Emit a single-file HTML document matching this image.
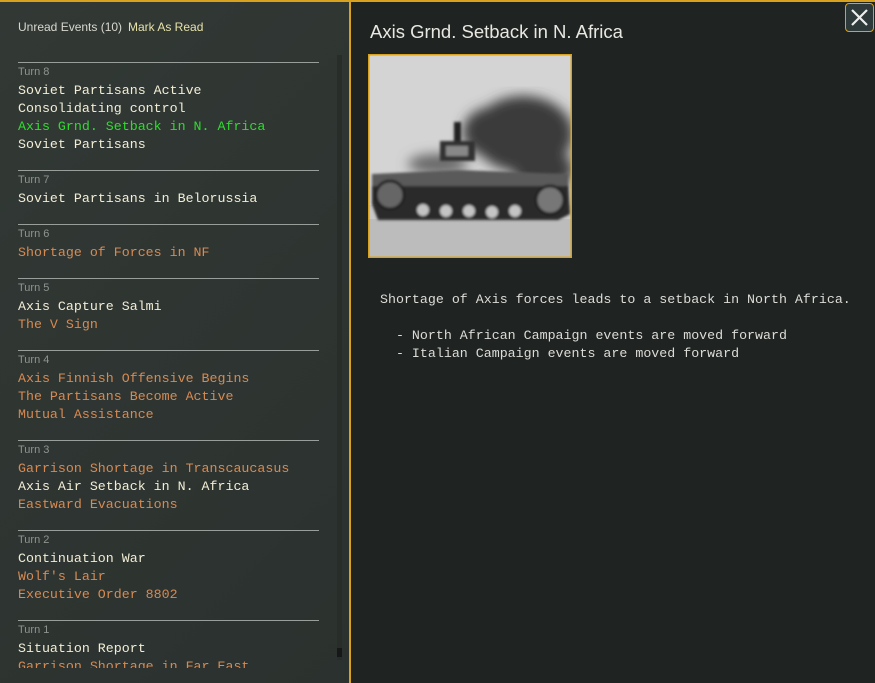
<!DOCTYPE html>
<html><head><style>
*{margin:0;padding:0;box-sizing:border-box}
body{width:875px;height:683px;overflow:hidden;background:#1f2321;position:relative;font-family:"Liberation Sans",sans-serif}
#left{position:absolute;left:0;top:0;width:350px;height:683px;background:linear-gradient(135deg,#323935,#2b312e)}
#top{position:absolute;left:0;top:0;width:875px;height:2px;background:#d9a21e}
#vl{position:absolute;left:349px;top:0;width:2px;height:683px;background:#d9a21e}
.h{position:absolute;top:20px;font-size:12px;color:#d8d8d0}
.sep{position:absolute;left:18px;width:301px;height:1px;background:#9a9e9a}
.t{position:absolute;left:18px;font-size:11px;color:#8f9490}
.e{position:absolute;left:18px;font-family:"Liberation Mono",monospace;font-size:13.3px;line-height:18px;white-space:pre}
.w{color:#f2eed6}.o{color:#d88a52}.g{color:#2fdc2f}
.r{position:absolute;left:380px;font-family:"Liberation Mono",monospace;font-size:13.3px;line-height:18px;color:#dcdcd8;white-space:pre}
</style></head><body>
<div id="left"></div>
<div style="position:absolute;left:337px;top:55px;width:5px;height:605px;background:#282d2a"></div>
<div style="position:absolute;left:337px;top:648px;width:5px;height:9px;background:#151816"></div>
<div id="top"></div><div id="vl"></div>
<div class="h" style="left:18px">Unread Events (10)</div>
<div class="h" style="left:128px;color:#e6e2a8">Mark As Read</div>

<div class="sep" style="top:62px"></div><div class="t" style="top:66px">Turn 8</div>
<div class="e w" style="top:82px">Soviet Partisans Active</div>
<div class="e w" style="top:100px">Consolidating control</div>
<div class="e g" style="top:118px">Axis Grnd. Setback in N. Africa</div>
<div class="e w" style="top:136px">Soviet Partisans</div>

<div class="sep" style="top:170px"></div><div class="t" style="top:174px">Turn 7</div>
<div class="e w" style="top:190px">Soviet Partisans in Belorussia</div>

<div class="sep" style="top:224px"></div><div class="t" style="top:228px">Turn 6</div>
<div class="e o" style="top:244px">Shortage of Forces in NF</div>

<div class="sep" style="top:278px"></div><div class="t" style="top:282px">Turn 5</div>
<div class="e w" style="top:298px">Axis Capture Salmi</div>
<div class="e o" style="top:316px">The V Sign</div>

<div class="sep" style="top:350px"></div><div class="t" style="top:354px">Turn 4</div>
<div class="e o" style="top:370px">Axis Finnish Offensive Begins</div>
<div class="e o" style="top:388px">The Partisans Become Active</div>
<div class="e o" style="top:406px">Mutual Assistance</div>

<div class="sep" style="top:440px"></div><div class="t" style="top:444px">Turn 3</div>
<div class="e o" style="top:460px">Garrison Shortage in Transcaucasus</div>
<div class="e w" style="top:478px">Axis Air Setback in N. Africa</div>
<div class="e o" style="top:496px">Eastward Evacuations</div>

<div class="sep" style="top:530px"></div><div class="t" style="top:534px">Turn 2</div>
<div class="e w" style="top:550px">Continuation War</div>
<div class="e o" style="top:568px">Wolf's Lair</div>
<div class="e o" style="top:586px">Executive Order 8802</div>

<div class="sep" style="top:620px"></div><div class="t" style="top:624px">Turn 1</div>
<div class="e w" style="top:640px">Situation Report</div>
<div style="position:absolute;left:0;top:658px;width:336px;height:10px;overflow:hidden"><div class="e o" style="top:0px">Garrison Shortage in Far East</div></div>

<div style="position:absolute;left:370px;top:21px;font-size:18.5px;color:#e8e8e2">Axis Grnd. Setback in N. Africa</div>
<div style="position:absolute;left:845px;top:3px;width:29px;height:29px;border:1px solid #d9a21e;border-radius:4px;background:#2e3a3a">
<svg width="27" height="27" viewBox="0 0 27 27"><path d="M6 6L21 21M21 6L6 21" stroke="#eee" stroke-width="2.2"/></svg></div>

<svg style="position:absolute;left:368px;top:54px" width="204" height="204" viewBox="0 0 204 204">
<defs><filter id="b"><feGaussianBlur stdDeviation="6"/></filter><filter id="b2"><feGaussianBlur stdDeviation="1.2"/></filter></defs>
<rect x="0" y="0" width="204" height="204" fill="#c9c9c9"/>
<rect x="1" y="1" width="202" height="150" fill="#d4d4d4"/>
<rect x="1" y="165" width="202" height="38" fill="#bcbcbc"/>
<g filter="url(#b)" fill="#3a3a3a">
<ellipse cx="155" cy="80" rx="50" ry="38"/>
<ellipse cx="125" cy="78" rx="30" ry="25"/>
<ellipse cx="175" cy="115" rx="30" ry="20"/>
<ellipse cx="70" cy="110" rx="30" ry="10" fill="#666"/>
</g>
<g filter="url(#b2)">
<rect x="86" y="68" width="7" height="22" fill="#222"/>
<rect x="72" y="87" width="35" height="20" fill="#333"/>
<rect x="78" y="92" width="22" height="10" fill="#888"/>
<path d="M4 128 L200 125 L202 160 L190 166 L10 166 L4 150Z" fill="#2a2a2a"/>
<path d="M4 120 L90 116 L200 120 L200 132 L4 132Z" fill="#5a5a5a"/>
<g fill="#c4c4c4" stroke="#222" stroke-width="2">
<circle cx="55" cy="156" r="7"/><circle cx="78" cy="157" r="7"/><circle cx="101" cy="157" r="7"/><circle cx="124" cy="158" r="7"/><circle cx="147" cy="157" r="7"/>
</g>
<circle cx="22" cy="141" r="14" fill="#666" stroke="#222" stroke-width="3"/>
<circle cx="182" cy="146" r="14" fill="#777" stroke="#222" stroke-width="3"/>
</g>
<rect x="0.75" y="0.75" width="202.5" height="202.5" fill="none" stroke="#d9a21e" stroke-width="1.5"/>
</svg>

<div class="r" style="top:291px">Shortage of Axis forces leads to a setback in North Africa.</div>
<div class="r" style="top:327px">  - North African Campaign events are moved forward</div>
<div class="r" style="top:345px">  - Italian Campaign events are moved forward</div>
</body></html>
